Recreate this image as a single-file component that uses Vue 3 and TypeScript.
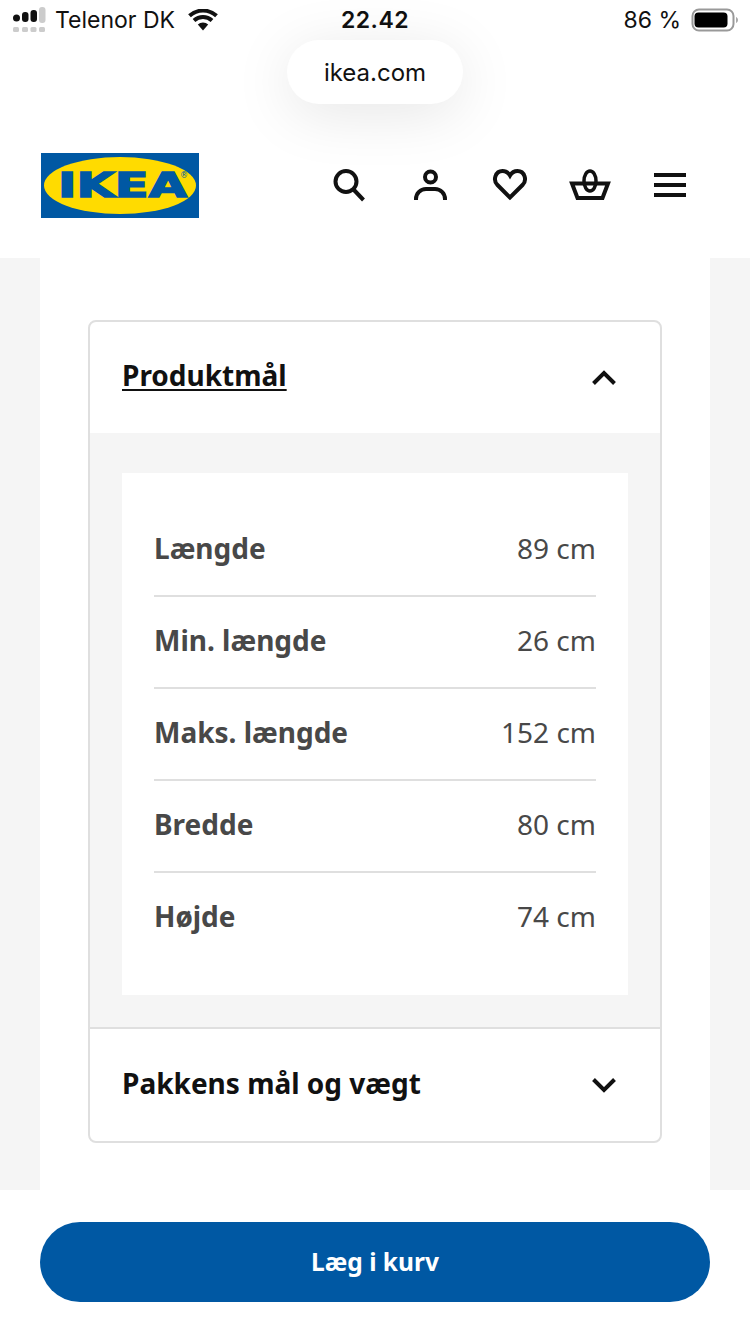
<script setup lang="ts">
type Row = { label: string; value: string };

const rows: Row[] = [
  { label: "Længde", value: "89 cm" },
  { label: "Min. længde", value: "26 cm" },
  { label: "Maks. længde", value: "152 cm" },
  { label: "Bredde", value: "80 cm" },
  { label: "Højde", value: "74 cm" },
];
</script>

<template>
  <div class="page">
    <div class="status">
      <div class="status-left">
        <svg width="34" height="26" viewBox="0 0 34 26">
          <circle cx="3.500" cy="11" r="3.500" fill="#111" />
          <rect x="9" y="5" width="6.500" height="10" rx="3" fill="#111" />
          <rect x="17.500" y="3" width="6.500" height="12" rx="3" fill="#111" />
          <rect x="26" y="0" width="6.500" height="16" rx="3" fill="#ccc" />
          <rect x="0" y="20" width="6" height="5" rx="1.500" fill="#ccc" />
          <rect x="9" y="20" width="6" height="5" rx="1.500" fill="#ccc" />
          <rect x="17.500" y="20" width="6" height="5" rx="1.500" fill="#ccc" />
          <rect x="26" y="20" width="6" height="5" rx="1.500" fill="#ccc" />
        </svg>
        <span>Telenor DK</span>
        <svg class="wifi" width="30" height="22" viewBox="0 0 30 22" fill="none" stroke="#111" stroke-width="4">
          <path d="M15 21.500 9.800 15.500a7.800 7.800 0 0 1 10.400 0Z" fill="#111" stroke="none" />
          <path d="M6 11.500a13.500 13.500 0 0 1 18 0" />
          <path d="M1.500 6.800a20 20 0 0 1 27 0" />
        </svg>
      </div>
      <div class="clock">22.42</div>
      <div class="status-right">
        <span>86 %</span>
        <svg width="49" height="24" viewBox="0 0 49 24">
          <rect x="3.500" y="1.500" width="41" height="21" rx="6.500" fill="none" stroke="#999" stroke-width="2" />
          <rect x="5.500" y="4.500" width="33" height="15" rx="4" fill="#000" />
          <path d="M47 9c1.300.5 2 1.700 2 3s-.7 2.500-2 3Z" fill="#aaa" />
        </svg>
      </div>
    </div>

    <div class="url-pill">ikea.com</div>

    <header class="header">
      <svg class="logo" width="158" height="65" viewBox="0 0 158 65">
        <rect width="158" height="65" fill="#0058a3" />
        <ellipse cx="79" cy="32.500" rx="76" ry="28.500" fill="#ffdb00" />
        <text x="17" y="44" class="logo-text" textLength="129" lengthAdjust="spacingAndGlyphs">IKEA</text>
        <text x="139" y="25" class="logo-mark">®</text>
      </svg>
      <nav class="icons">
        <svg width="40" height="40" viewBox="0 0 40 40" fill="none" stroke="#111" stroke-width="4">
          <circle cx="16" cy="16.500" r="10.500" />
          <path d="M23.500 24.500 33.500 35" />
        </svg>
        <svg width="40" height="40" viewBox="0 0 40 40" fill="none" stroke="#111" stroke-width="4">
          <circle cx="20.500" cy="12" r="5.500" />
          <path d="M6 35v-1c0-5.500 4.500-10 10-10h9c5.500 0 10 4.500 10 10v1" />
        </svg>
        <svg width="40" height="40" viewBox="0 0 40 40" fill="none" stroke="#111" stroke-width="4">
          <path d="M20 32.500 7.500 20C2.500 15 5.500 6 12.500 6c3.500 0 6 2 7.500 4.500C21.500 8 24 6 27.500 6c7 0 10 9 5 14Z" />
        </svg>
        <svg class="basket" width="40" height="40" viewBox="0 0 40 40" fill="none" stroke="#111" stroke-width="4">
          <path d="M2 18.500h36L32.500 33h-25Z" />
          <ellipse cx="20" cy="16" rx="6" ry="10" stroke-width="3.500" />
        </svg>
        <svg width="40" height="40" viewBox="0 0 40 40" fill="#111">
          <rect x="4" y="8" width="32" height="4" />
          <rect x="4" y="18" width="32" height="4" />
          <rect x="4" y="28" width="32" height="4" />
        </svg>
      </nav>
    </header>

    <main class="content">
      <div class="sheet">
        <section class="card">
          <div class="acc-head">
            <span class="acc-title active">Produktmål</span>
            <svg width="28" height="28" viewBox="0 0 28 28" fill="none" stroke="#111" stroke-width="4">
              <path d="M3.500 19.500 14 9l10.500 10.500" />
            </svg>
          </div>
          <div class="acc-body">
            <div class="table">
              <div v-for="r in rows" :key="r.label" class="row">
                <span class="row-label">{{ r.label }}</span>
                <span class="row-value">{{ r.value }}</span>
              </div>
            </div>
          </div>
          <div class="acc-head second">
            <span class="acc-title">Pakkens mål og vægt</span>
            <svg width="28" height="28" viewBox="0 0 28 28" fill="none" stroke="#111" stroke-width="4">
              <path d="M3.500 8.500 14 19 24.500 8.500" />
            </svg>
          </div>
        </section>
      </div>
    </main>

    <footer class="footer">
      <button type="button" class="buy">Læg i kurv</button>
    </footer>
  </div>
</template>

<style>
html,body{margin:0;background:#fff}
</style>

<style scoped>
.page{position:relative;width:750px;height:1334px;overflow:hidden;background:#fff;font-family:"Noto Sans",sans-serif;color:#111;display:flex;flex-direction:column}

.status{height:40px;padding:0 12px 0 13px;display:flex;align-items:center;justify-content:space-between;font-family:Inter,sans-serif;font-size:23px;position:relative;box-sizing:border-box}
.status-left{display:flex;align-items:center;gap:8px}
.status-right{display:flex;align-items:center;gap:8px}
.clock{position:absolute;left:0;right:0;text-align:center;font-weight:600;letter-spacing:.5px}
.wifi{margin-left:5px}

.url-pill{position:absolute;left:287px;top:40px;width:176px;height:64px;border-radius:32px;background:#fff;box-shadow:0 10px 60px rgba(0,0,0,.1);display:flex;align-items:center;justify-content:center;font-family:Inter,sans-serif;font-size:24px;z-index:2}

.header{height:218px;box-sizing:border-box;padding:113px 60px 0 41px;display:flex;justify-content:space-between;align-items:flex-start}
.logo-text{font-family:"DejaVu Sans",sans-serif;font-weight:700;font-size:33px;fill:#0058a3;stroke:#0058a3;stroke-width:1.500px}
.logo-mark{font-family:"DejaVu Sans",sans-serif;font-size:8px;fill:#0058a3}
.icons{display:flex;gap:40px;padding-top:12px}
.basket{overflow:visible}

.content{flex:1;background:#f5f5f5;padding:0 40px;display:flex;min-height:0}
.sheet{flex:1;background:#fff;padding:62px 48px 0}

.card{border:2px solid #dfdfdf;border-radius:8px;overflow:hidden}
.acc-head{height:111px;padding:0 42px 0 32px;display:flex;align-items:center;justify-content:space-between}
.acc-head.second{border-top:2px solid #dfdfdf;height:112px}
.acc-title{font-size:28px;font-weight:700;line-height:40px;padding-bottom:4px}
.acc-title.active{text-decoration:underline;text-decoration-thickness:2px;text-underline-offset:3px;padding-bottom:6px}
.acc-body{background:#f5f5f5;padding:40px 32px 32px}
.table{background:#fff;padding:32px 32px}
.row{height:86px;padding-bottom:4px;display:flex;align-items:center;justify-content:space-between;border-bottom:2px solid #dfdfdf;font-size:28px;color:#484848}
.row:last-child{border-bottom:0}
.row-label{font-weight:700}

.footer{height:144px;box-sizing:border-box;padding:32px 40px 0;background:#fff}
.buy{width:100%;height:80px;border:0;border-radius:40px;background:#0058a3;color:#fff;font-family:"Noto Sans",sans-serif;font-size:24.500px;font-weight:700;padding:0 0 2px}
</style>
